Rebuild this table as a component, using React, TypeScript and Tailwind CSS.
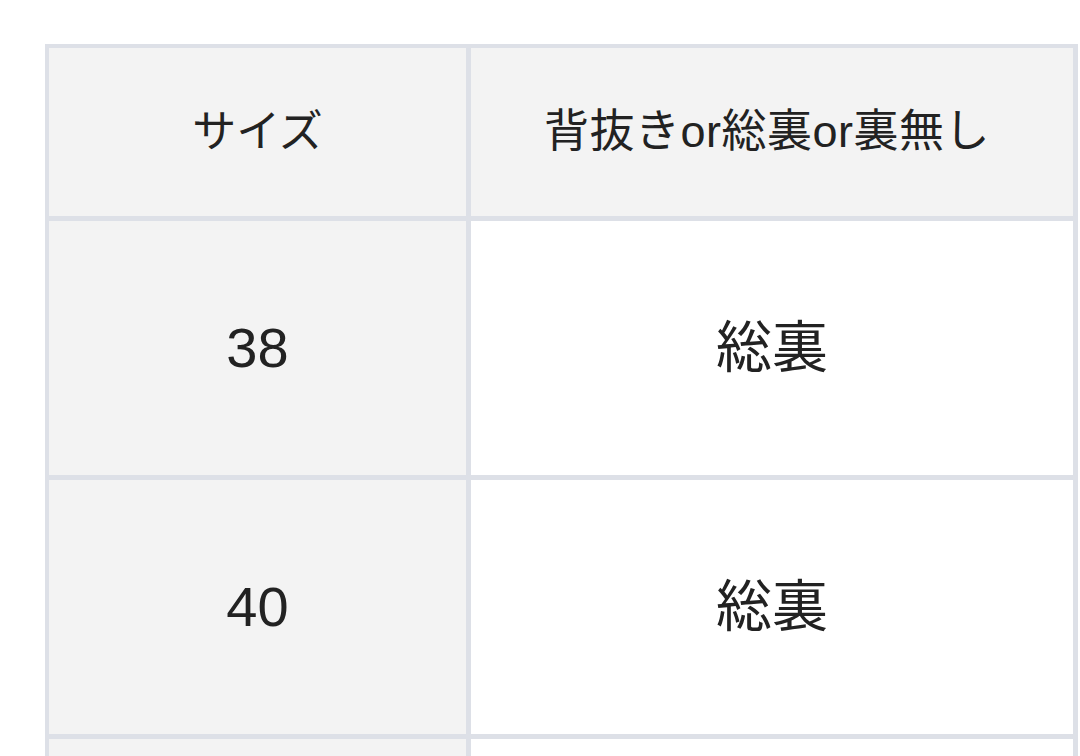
const rows = [
  { size: '38', lining: '総裏' },
  { size: '40', lining: '総裏' },
];

export default function App() {
  return (
    <div
      className="h-screen overflow-hidden bg-white pt-[44px] pl-[45px] text-[#222]"
      style={{ fontFamily: '"Liberation Sans", "Noto Sans CJK JP", sans-serif' }}
    >
      <div className="grid w-[1033px] grid-cols-[417px_602px] gap-[5px] bg-[#dde0e7] p-[4px]">
        <div className="flex h-[168px] items-center justify-center bg-[#f3f3f3] text-[44px]">サイズ</div>
        <div className="flex h-[168px] items-center justify-center bg-[#f3f3f3] pr-[10px] text-[45px] tracking-[0.5px]">
          背抜きor総裏or裏無し
        </div>
        {rows.map((row) => (
          <div key={row.size} className="contents">
            <div className="flex h-[254px] items-center justify-center bg-[#f3f3f3] text-[56px]">{row.size}</div>
            <div className="flex h-[254px] items-center justify-center bg-white text-[56px]">{row.lining}</div>
          </div>
        ))}
        {/* next row starts just below the fold */}
        <div className="h-[254px] bg-[#f3f3f3]" />
        <div className="h-[254px] bg-white" />
      </div>
    </div>
  );
}
